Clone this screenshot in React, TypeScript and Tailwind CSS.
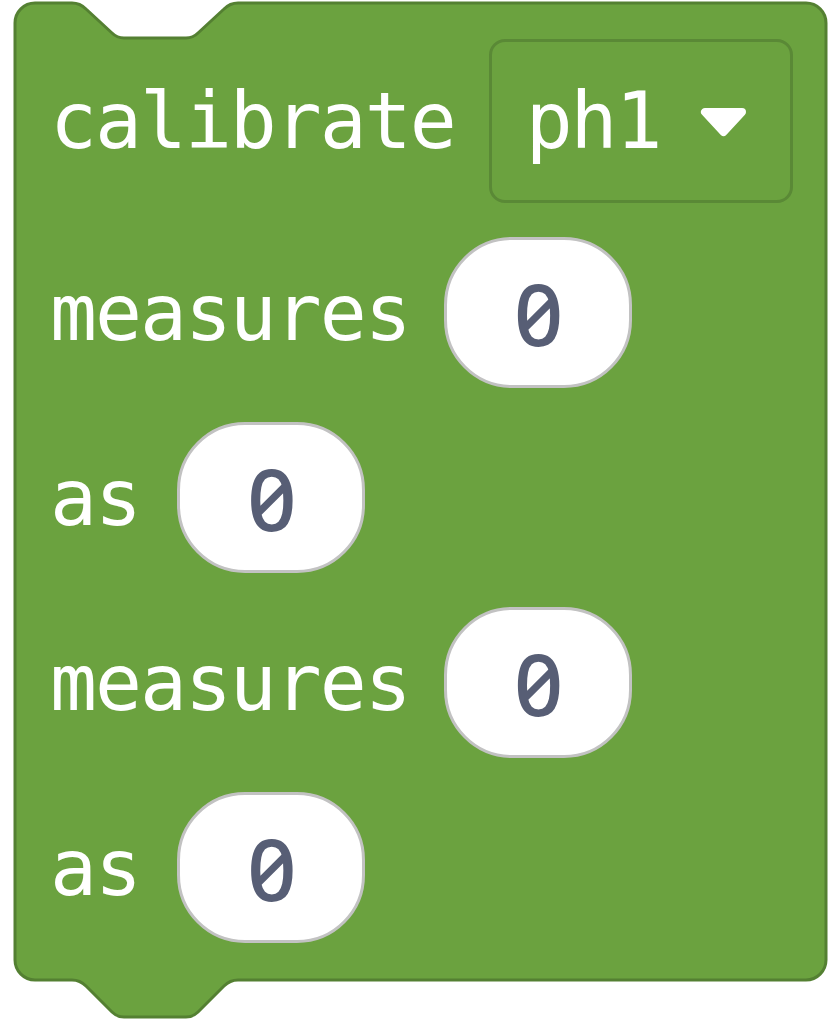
import React from 'react';

const mono = "font-['DejaVu_Sans_Mono',monospace] text-[78px] leading-none tracking-[-2px]";

// Block outline with the top notch and the bottom tab
function BlockShape() {
    return (
        <svg className="absolute inset-0" width="839" height="1024" viewBox="0 0 839 1024">
            <path
                d="M15 23 A20 20 0 0 1 35 3 L72 3 C78 3 82 5 86 9 L112 33 C116 37 119 38 124 38 L186 38 C191 38 194 37 198 33 L224 9 C228 5 232 3 238 3 L806 3 A20 20 0 0 1 826 23 L826 960 A20 20 0 0 1 806 980 L238 980 C232 980 228 982 224 986 L198 1012 C194 1016 191 1017 186 1017 L124 1017 C119 1017 116 1016 112 1012 L86 986 C82 982 78 980 72 980 L35 980 A20 20 0 0 1 15 960 Z"
                fill="#6ba23f"
                stroke="#548032"
                strokeWidth="3"
                strokeLinejoin="round"
            />
        </svg>
    );
}

function Label({ text }: { text: string }) {
    return <span className={`${mono} text-white`}>{text}</span>;
}

function NumberField({ value }: { value: string }) {
    return (
        <div className="w-[188px] h-[151px] rounded-[68px] bg-white border-[3px] border-[#c2c2c2] flex items-center justify-center">
            <span className="font-['Noto_Sans',sans-serif] font-medium text-[86px] leading-none slashed-zero text-[#575e75] pl-[2px]">
                {value}
            </span>
        </div>
    );
}

function Dropdown({ value }: { value: string }) {
    return (
        <div className="w-[304px] h-[164px] rounded-[16px] border-[3px] border-[#5a8936] flex items-center pl-[34px]">
            <span className={`${mono} text-white`}>{value}</span>
            <svg className="ml-[38px]" width="49" height="31" viewBox="0 0 49 31">
                <path d="M6 6 L43 6 L24.5 26 Z" fill="#ffffff" stroke="#ffffff" strokeWidth="8" strokeLinejoin="round" />
            </svg>
        </div>
    );
}

export default function App() {
    return (
        <div className="relative w-[839px] h-[1024px] bg-white overflow-hidden">
            <BlockShape />
            <div className="relative flex flex-col gap-[34px] pl-[50px] pt-[39px]">
                <div className="flex items-center gap-[34px]">
                    <Label text="calibrate" />
                    <Dropdown value="ph1" />
                </div>
                <div className="flex items-center gap-[34px]">
                    <Label text="measures" />
                    <NumberField value="0" />
                </div>
                <div className="flex items-center gap-[37px]">
                    <Label text="as" />
                    <NumberField value="0" />
                </div>
                <div className="flex items-center gap-[34px]">
                    <Label text="measures" />
                    <NumberField value="0" />
                </div>
                <div className="flex items-center gap-[37px]">
                    <Label text="as" />
                    <NumberField value="0" />
                </div>
            </div>
        </div>
    );
}
